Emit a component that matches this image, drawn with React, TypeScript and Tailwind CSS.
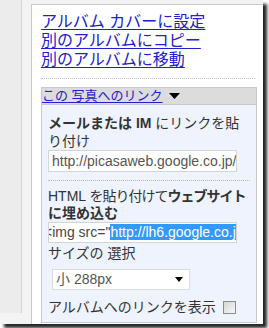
import React from 'react';

const Links = ['アルバム カバーに設定', '別のアルバムにコピー', '別のアルバムに移動'];

const App: React.FC = () => {
  return (
    <div className="w-[269px] h-[328px] bg-white overflow-hidden font-['Liberation_Sans','Noto_Sans_CJK_JP',sans-serif]">
      <div className="w-[263px] h-[324px] flex bg-[#f3f3f3] shadow-[4px_4px_3px_rgba(0,0,0,0.85)]">
        {/* left column */}
        <div className="w-[22px] h-[313px] shrink-0 bg-[#ececec] border-r border-[#d6d6d6]" />

        {/* panel */}
        <div className="ml-[9px] mt-[4px] flex-1 bg-white border-l border-t border-[#c9c9c9] pl-[9px] pr-[6px] pt-[7px]">
          <div className="flex flex-col items-start">
            {Links.map((l) => (
              <a key={l} className="text-[16px] leading-[19px] text-[#2020cc] underline underline-offset-2 whitespace-nowrap">
                {l}
              </a>
            ))}
          </div>

          <div className="mt-[9px] border-t border-dotted border-[#bdbdbd] mr-[2px]" />

          {/* header */}
          <div className="mt-[8px] h-[18px] flex items-center bg-[#dcdcdc] border border-[#c9c9c9]">
            <a className="text-[13px] leading-[16px] text-[#2020cc] underline underline-offset-2 whitespace-nowrap">
              この 写真へのリンク
            </a>
            <svg width="11" height="6" viewBox="0 0 11 6" className="ml-[6px]">
              <polygon points="0,0 11,0 5.5,6" fill="#000" />
            </svg>
          </div>

          {/* link box */}
          <div className="bg-[#eef3fd] border-x border-b border-[#c9c9c9] pl-[6px] pt-[9px] pb-[6px] text-[#333]">
            <div className="text-[14px] leading-[18px] whitespace-nowrap">
              <span className="font-bold">メールまたは IM </span>にリンクを貼
              <br />
              り付け
            </div>
            <div className="w-[189px] h-[22px] bg-white border border-[#d4d4d4] pl-[3px] flex items-center overflow-hidden">
              <span className="text-[14px] text-[#555] whitespace-nowrap">http://picasaweb.google.co.jp/</span>
            </div>

            <div className="mt-[8px] mr-[6px] border-t border-dotted border-[#bdbdbd]" />

            <div className="mt-[7px] text-[14px] leading-[17px] whitespace-nowrap">
              HTML <span className="tracking-[-1px]">を貼り付けて<span className="font-bold">ウェブサイト</span></span>
              <br />
              <span className="font-bold">に埋め込む</span>
            </div>
            <div className="w-[189px] h-[21px] bg-white border border-[#d4d4d4] flex items-center overflow-hidden">
              <span className="ml-[-5px] text-[14px] leading-[17px] text-[#444] whitespace-nowrap">
                &lt;img src="<span className="bg-[#3399ff] text-white">http://lh6.google.co.jp/</span>
              </span>
            </div>

            <div className="mt-[1px] text-[14px] leading-[18px] whitespace-nowrap">サイズの 選択</div>

            <div className="mt-[7px] ml-[4px] w-[138px] h-[21px] bg-white border border-[#dcdcdc] flex items-center pl-[3px] pr-[6px]">
              <span className="flex-1 text-[14px] text-[#555] whitespace-nowrap">小 288px</span>
              <svg width="8" height="5" viewBox="0 0 8 5">
                <polygon points="0,0 8,0 4,5" fill="#000" />
              </svg>
            </div>

            <div className="mt-[8px] flex items-center h-[18px]">
              <span className="text-[14px] leading-[18px] whitespace-nowrap">アルバムへのリンクを表示</span>
              <div className="ml-[7px] w-[13px] h-[13px] border border-[#8c8c8c] bg-gradient-to-br from-[#d6d6d6] to-[#f7f7f7]" />
            </div>
          </div>
        </div>
      </div>
    </div>
  );
};

export default App;
